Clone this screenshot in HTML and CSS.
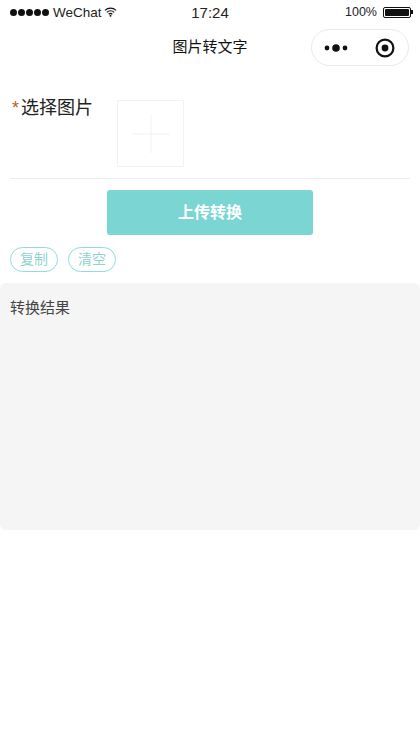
FILE: index.html
```html
<!DOCTYPE html>
<html lang="zh">
<head>
<meta charset="utf-8">
<title>图片转文字</title>
<link rel="stylesheet" href="styles.css">
</head>
<body>
<div class="status">
  <div class="status-left">
    <span class="dots"><i></i><i></i><i></i><i></i><i></i></span>
    <span class="carrier">WeChat</span>
    <svg class="wifi" width="13" height="10" viewBox="0 0 14 10"><path d="M1 3.2a9 9 0 0 1 12 0M3 5.4a6 6 0 0 1 8 0M5 7.4a3 3 0 0 1 4 0" fill="none" stroke="#111" stroke-width="1.3"/><circle cx="7" cy="9" r="1" fill="#111"/></svg>
  </div>
  <div class="status-time">17:24</div>
  <div class="status-right">
    <span class="pct">100%</span>
    <span class="battery"><span class="battery-fill"></span></span>
    <span class="battery-tip"></span>
  </div>
</div>
<div class="nav">
  <div class="nav-title">图片转文字</div>
  <div class="capsule">
    <svg class="more" width="24" height="8" viewBox="0 0 24 8"><circle cx="3" cy="4" r="2.4"/><circle cx="12" cy="4" r="3.8"/><circle cx="21" cy="4" r="2.4"/></svg>
    <svg class="target" width="20" height="20" viewBox="0 0 20 20"><circle cx="10" cy="10" r="8.4" fill="none" stroke="#111" stroke-width="2.2"/><circle cx="10" cy="10" r="3.4" fill="#111"/></svg>
  </div>
</div>
<div class="form-row">
  <div class="label"><span class="star">*</span>选择图片</div>
  <div class="uploader">
    <svg width="38" height="38" viewBox="0 0 38 38"><path d="M0 19H38M19 0V38" stroke="#f2f2f2" stroke-width="1" fill="none"/></svg>
  </div>
</div>
<div class="submit-wrap"><button class="submit">上传转换</button></div>
<div class="tags">
  <span class="tag">复制</span>
  <span class="tag">清空</span>
</div>
<div class="result">转换结果</div>
</body>
</html>
```

FILE: styles.css
```css
* { box-sizing: border-box; }
html, body { margin: 0; padding: 0; background: #fff; }
body {
  width: 420px;
  height: 747px;
  overflow: hidden;
  font-family: "Liberation Sans", "Noto Sans CJK SC", sans-serif;
  color: #222;
}
.status {
  height: 24px;
  display: grid;
  grid-template-columns: 1fr auto 1fr;
  align-items: center;
  padding: 0 7px 0 10px;
  font-size: 14px;
  color: #222;
}
.status-left { display: flex; align-items: center; }
.dots { display: flex; gap: 1px; margin-right: 4px; }
.dots i { width: 7px; height: 7px; border-radius: 50%; background: #111; }
.carrier { font-size: 13.5px; }
.wifi { margin-left: 2px; }
.status-time { font-size: 15px; margin-right: 3px; }
.status-right { display: flex; align-items: center; justify-content: flex-end; }
.pct { font-size: 12.5px; margin-right: 6px; }
.battery { width: 28px; height: 11px; border: 1px solid #111; border-radius: 2px; padding: 1px; display: block; }
.battery-fill { display: block; height: 100%; background: #111; border-radius: 1px; }
.battery-tip { width: 2px; height: 4px; background: #111; }
.nav {
  height: 48px;
  position: relative;
  display: flex;
  align-items: center;
  justify-content: center;
  padding-bottom: 5px;
}
.nav-title { font-size: 15px; color: #111; }
.capsule {
  position: absolute;
  right: 11px;
  top: 5px;
  width: 98px;
  height: 37px;
  border: 1px solid #eaeaea;
  border-radius: 19px;
  display: flex;
  align-items: center;
  justify-content: space-between;
  padding: 0 13px 0 12px;
  background: #fff;
}
.more { fill: #111; }
.form-row {
  margin: 28px 10px 0;
  height: 79px;
  display: flex;
  border-bottom: 1px solid #ececec;
}
.label { width: 107px; font-size: 18px; line-height: 20px; color: #222; margin-top: -2px; }
.star { color: #b5602d; margin: 0 2px; }
.uploader {
  width: 67px;
  height: 67px;
  border: 1px solid #f2f2f2;
  display: flex;
  align-items: center;
  justify-content: center;
}
.submit-wrap { margin: 11px 0 0 107px; }
.submit {
  display: block;
  width: 206px;
  height: 45px;
  border: 0;
  border-radius: 3px;
  background: #7ad5d3;
  color: #fff;
  font: bold 16px "Liberation Sans", "Noto Sans CJK SC", sans-serif;
  padding: 0 0 3px;
}
.tags { display: flex; gap: 10px; margin: 12px 10px 0; }
.tag {
  width: 48px;
  height: 25px;
  border: 1.5px solid #8fdbe0;
  border-radius: 13px;
  color: #8fd3d0;
  font-size: 14px;
  line-height: 23px;
  text-align: center;
}
.result {
  margin-top: 11px;
  height: 247px;
  background: #f5f5f5;
  border-radius: 6px;
  padding: 16px 10px;
  font-size: 15px;
  line-height: 18px;
  color: #444;
}
```
